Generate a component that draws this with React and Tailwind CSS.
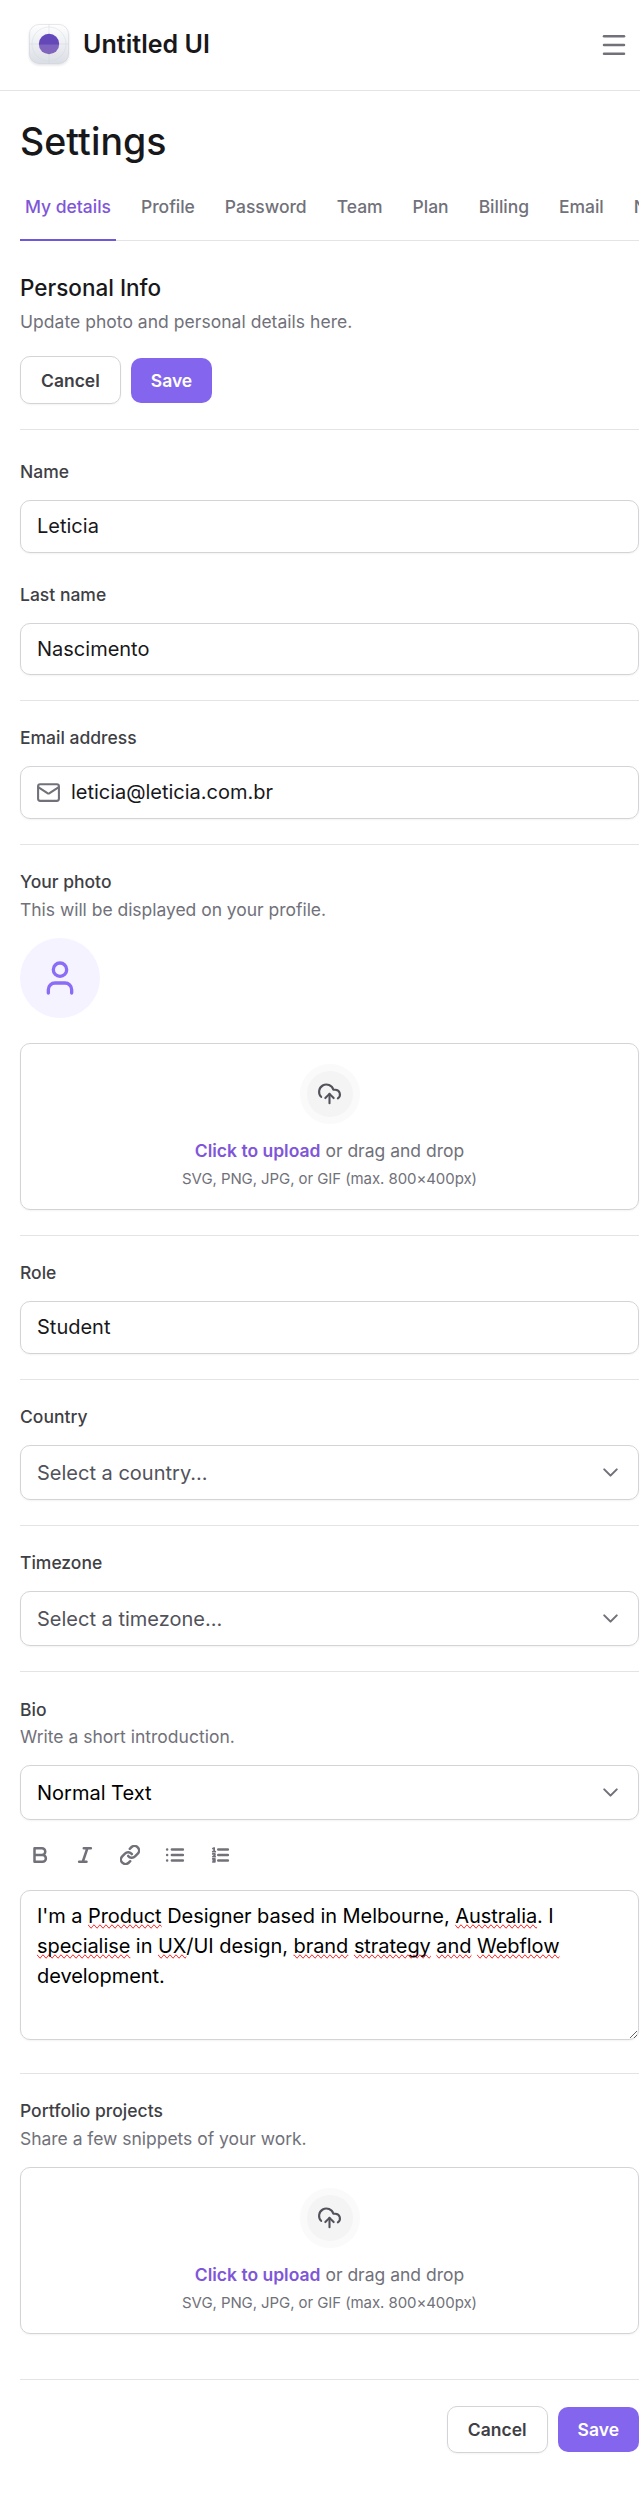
import React from "react";
import { Menu, User, ChevronDown } from "lucide-react";

const tabs = ["My details", "Profile", "Password", "Team", "Plan", "Billing", "Email", "Notifications"];

function Logo() {
  return (
    <svg width="50" height="50" viewBox="0 0 50 50" className="shrink-0">
      <defs>
        <linearGradient id="tile" x1="0" y1="0" x2="0" y2="1">
          <stop offset="0" stopColor="#ffffff" />
          <stop offset="1" stopColor="#dadde4" />
        </linearGradient>
        <linearGradient id="dot" x1="0" y1="0" x2="0" y2="1">
          <stop offset="0" stopColor="#6148be" />
          <stop offset="1" stopColor="#6a48ae" />
        </linearGradient>
        <filter id="drop" x="-20%" y="-20%" width="140%" height="150%">
          <feDropShadow dx="0" dy="1.2" stdDeviation="1.3" floodColor="#101828" floodOpacity="0.12" />
        </filter>
      </defs>
      <rect x="5" y="5" width="40" height="40" rx="10" fill="url(#tile)" filter="url(#drop)" />
      <rect x="5.5" y="5.5" width="39" height="39" rx="9.5" fill="none" stroke="#d0d5dd" strokeOpacity="0.55" />
      <g fill="none" stroke="#d0d5dd" strokeWidth="0.6" strokeOpacity="0.7">
        <circle cx="25" cy="25" r="17" />
        <path d="M25 5v40M5 25h40" />
      </g>
      <circle cx="25" cy="25" r="10.2" fill="url(#dot)" />
      <path d="M14.8 25.4h20.4a10.2 10.2 0 0 1-20.4 0Z" fill="#ffffff" fillOpacity="0.16" />
    </svg>
  );
}

function CloudUpload() {
  return (
    <svg width="25" height="25" viewBox="0 0.6 24 24" fill="none" stroke="#52525b" strokeWidth="2" strokeLinecap="round" strokeLinejoin="round">
      <path d="M4 14.899A7 7 0 1 1 15.71 8h1.79a4.5 4.5 0 0 1 2.5 8.242" />
      <path d="M12 12v9" />
      <path d="m16 16-4-4-4 4" />
    </svg>
  );
}

function MailIcon() {
  return (
    <svg width="25" height="25" viewBox="0 0 24 24" fill="none" stroke="#71717a" strokeWidth="2" strokeLinecap="round" strokeLinejoin="round">
      <rect x="2" y="4" width="20" height="16" rx="2" />
      <path d="m2.5 7 8.47 5.7a1.94 1.94 0 0 0 2.06 0L21.5 7" />
    </svg>
  );
}

function Label({ children }) {
  return <div className="text-[17.5px] leading-[25px] font-medium text-[#3f3f46]">{children}</div>;
}

function Hint({ children, spacing = "" }) {
  return <div className={"text-[17.5px] leading-[25px] text-[#71717a] " + spacing}>{children}</div>;
}

function Divider() {
  return <div className="h-px bg-[#e4e4e7]" />;
}

function Field({ children, height = "h-[53px]", inset = "px-4" }) {
  return (
    <div
      className={
        "mt-4 flex items-center gap-2.5 rounded-[10px] border border-[#d4d4d8] pb-px text-[20px] leading-[30px] text-[#18181b] shadow-xs " +
        height +
        " " +
        inset
      }
    >
      {children}
    </div>
  );
}

function Select({ children, tone = "text-[#52525b]" }) {
  return (
    <div className="mt-4 flex h-[55px] items-center justify-between rounded-[10px] border border-[#d4d4d8] pr-[15px] pl-4 text-[20px] leading-[30px] shadow-xs">
      <span className={tone}>{children}</span>
      <ChevronDown size={25} color="#71717a" strokeWidth={2} />
    </div>
  );
}

function Upload() {
  return (
    <div className="flex h-[167px] flex-col items-center rounded-[10px] border border-[#d4d4d8] pt-5 shadow-xs">
      <div className="flex size-[60px] items-center justify-center rounded-full border-[7px] border-[#fafafa] bg-[#f4f4f5]">
        <CloudUpload />
      </div>
      <div className="mt-3.5 text-[17.5px] leading-[25px] text-[#71717a]">
        <span className="font-semibold text-[#7f56d9]">Click to upload</span> or drag and drop
      </div>
      <div className="mt-1.5 text-[15px] leading-[20px] tracking-[-0.08px] text-[#71717a]">
        SVG, PNG, JPG, or GIF (max. 800×400px)
      </div>
    </div>
  );
}

function Actions({ align = "items-center", cancel = "h-[47px]" }) {
  return (
    <div className={"flex gap-2.5 " + align}>
      <button
        className={
          "rounded-[10px] border border-[#d4d4d8] px-5 text-[17.5px] leading-[25px] font-semibold text-[#3f3f46] shadow-xs " +
          cancel
        }
      >
        Cancel
      </button>
      <button className="mb-px h-[45px] rounded-[10px] bg-[#8366ed] px-5 text-[17.5px] leading-[25px] font-semibold text-white">
        Save
      </button>
    </div>
  );
}

const iconProps = {
  width: 20,
  height: 20,
  viewBox: "0 0 16 16",
  fill: "none",
  stroke: "#71717a",
  strokeWidth: 2,
  strokeLinecap: "round",
  strokeLinejoin: "round",
};

function Toolbar() {
  return (
    <div className="flex h-[70px] items-center gap-[25px] pl-[10px]">
      <svg {...iconProps}>
        <path d="M3.6 2.6h5.9a2.7 2.7 0 0 1 0 5.4H3.6zM3.6 8h6.4a2.7 2.7 0 0 1 0 5.4H3.6z" />
      </svg>
      <svg {...iconProps}>
        <path d="M7 2.6h5.7M3.3 13.4h5.9M9.9 2.6 6.2 13.4" />
      </svg>
      <svg {...iconProps} viewBox="1 1 22 22" strokeWidth={2.7}>
        <path d="M10 13a5 5 0 0 0 7.54.54l3-3a5 5 0 0 0-7.07-7.07l-1.72 1.71" />
        <path d="M14 11a5 5 0 0 0-7.54-.54l-3 3a5 5 0 0 0 7.07 7.07l1.71-1.71" />
      </svg>
      <svg {...iconProps}>
        <path d="M5.5 3.6h8.8M5.5 8h8.8M5.5 12.4h8.8M1.7 3.6h.01M1.7 8h.01M1.7 12.4h.01" />
      </svg>
      <svg {...iconProps}>
        <path d="M6.6 3.6h7.7M6.6 8h7.7M6.6 12.4h7.7" />
        <path strokeWidth="1.4" d="M2.3 2.8l1-.4v2.8M2.2 5.3h2M2.2 7.1h1.7v1L2.3 9.3h1.8M2.2 11h1.7v2.4H2.2M2.6 12.2h1" />
      </svg>
    </div>
  );
}

function Misspelt({ children }) {
  return <span className="[text-decoration-line:spelling-error]">{children}</span>;
}

export default function App() {
  return (
    <div className="min-h-[2513px] overflow-hidden bg-white font-['Inter',sans-serif]">
      <header className="flex h-[91px] items-center justify-between border-b border-[#e4e4e7] pr-[11px] pl-6">
        <div className="flex items-center gap-[9px] pb-[3px]">
          <Logo />
          <span className="pt-px text-[25px] leading-[35px] font-semibold tracking-[0.05px] text-[#18181b]">
            Untitled UI
          </span>
        </div>
        <Menu size={30} color="#71717a" strokeWidth={2} />
      </header>

      <main className="mr-px ml-5">
        <h1 className="pt-[28px] text-[37.5px] leading-[45px] font-medium tracking-[0.05px] text-[#18181b]">Settings</h1>

        <nav className="mt-[30px] flex gap-5 overflow-x-clip border-b border-[#e4e4e7]">
          {tabs.map((tab, i) => (
            <div
              key={tab}
              className={
                "shrink-0 px-[5px] pb-5 text-[17.5px] leading-[25px] font-medium tracking-[-0.02px] " +
                (i === 0 ? "-mb-px border-b-2 border-[#7058dd] text-[#7f56d9]" : "text-[#71717a]")
              }
            >
              {tab}
            </div>
          ))}
        </nav>

        <h2 className="mt-[29px] text-[22.5px] leading-[35px] font-medium text-[#18181b]">Personal Info</h2>
        <div className="mt-1">
          <Hint spacing="tracking-[0.03px]">Update photo and personal details here.</Hint>
        </div>
        <div className="mt-[22px] mb-[25px]">
          <Actions align="items-end" cancel="h-[48px]" />
        </div>
        <Divider />

        <section className="pt-[29px] pb-[25px]">
          <Label>Name</Label>
          <Field>Leticia</Field>
          <div className="mt-[29px]">
            <Label>Last name</Label>
            <Field height="h-[52px]">Nascimento</Field>
          </div>
        </section>
        <Divider />

        <section className="pt-6 pb-[25px]">
          <Label>Email address</Label>
          <Field inset="px-[15px]">
            <MailIcon />
            <span className="tracking-[-0.02px]">leticia@leticia.com.br</span>
          </Field>
        </section>
        <Divider />

        <section className="pt-6 pb-[25px]">
          <Label>Your photo</Label>
          <div className="mt-[3px]">
            <Hint spacing="tracking-[-0.03px]">This will be displayed on your profile.</Hint>
          </div>
          <div className="mt-4 mb-[25px] flex size-20 items-center justify-center rounded-full bg-[#f5f3ff]">
            <User size={40} color="#8b6cf6" strokeWidth={2} />
          </div>
          <Upload />
        </section>
        <Divider />

        <section className="pt-6 pb-[25px]">
          <Label>Role</Label>
          <Field>Student</Field>
        </section>
        <Divider />

        <section className="pt-6 pb-[25px]">
          <Label>Country</Label>
          <Select>Select a country...</Select>
        </section>
        <Divider />

        <section className="pt-6 pb-[25px]">
          <Label>Timezone</Label>
          <Select>Select a timezone...</Select>
        </section>
        <Divider />

        <section className="pt-[25px] pb-[33px]">
          <Label>Bio</Label>
          <div className="mt-[2px]">
            <Hint>Write a short introduction.</Hint>
          </div>
          <Select tone="text-black">Normal Text</Select>
          <Toolbar />
          <div className="h-[150px] resize overflow-auto rounded-[10px] border border-[#d4d4d8] py-[10px] pr-[15px] pl-4 text-[20px] leading-[30px] tracking-[-0.06px] text-black shadow-xs">
            I'm a <Misspelt>Product</Misspelt> Designer based in Melbourne, <Misspelt>Australia</Misspelt>. I{" "}
            <Misspelt>specialise</Misspelt> in <Misspelt>UX</Misspelt>/UI design, <Misspelt>brand</Misspelt>{" "}
            <Misspelt>strategy</Misspelt> <Misspelt>and</Misspelt> <Misspelt>Webflow</Misspelt> development.
          </div>
        </section>
        <Divider />

        <section className="pt-6 pb-[45px]">
          <Label>Portfolio projects</Label>
          <div className="mt-[3px] mb-4">
            <Hint spacing="tracking-[-0.03px]">Share a few snippets of your work.</Hint>
          </div>
          <Upload />
        </section>
        <Divider />

        <div className="pt-[26px]">
          <Actions align="items-end justify-end" />
        </div>
      </main>
    </div>
  );
}
